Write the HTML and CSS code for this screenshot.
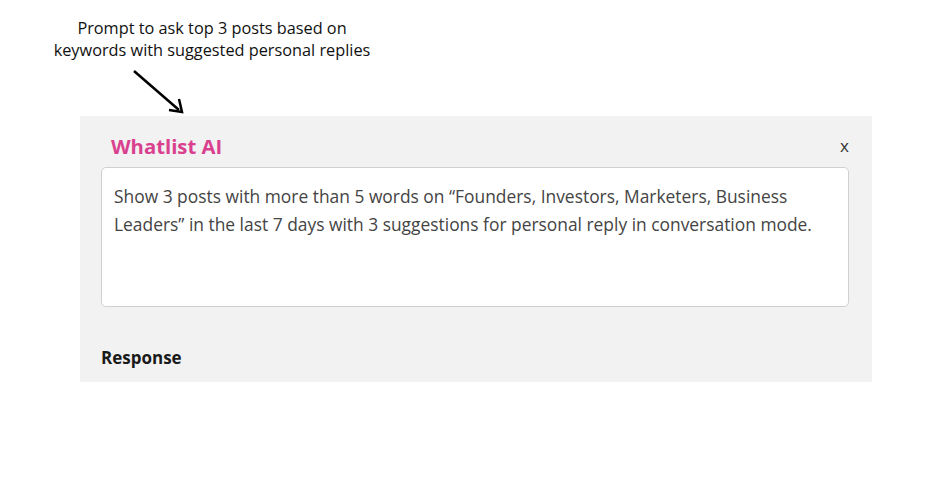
FILE: index.html
```html
<!DOCTYPE html>
<html>
<head>
<meta charset="utf-8">
<link rel="stylesheet" href="styles.css">
</head>
<body>
<div class="caption">Prompt to ask top 3 posts based on<br>keywords with suggested personal replies</div>
<svg class="arrow" width="200" height="55" viewBox="0 0 200 55">
  <line x1="134" y1="10" x2="179" y2="49" stroke="#000" stroke-width="2.5"/>
  <polyline points="169,49 182,51 179,38" fill="none" stroke="#000" stroke-width="2.5" stroke-linejoin="miter"/>
</svg>
<div class="panel">
  <div class="head">
    <span class="title">Whatlist AI</span>
    <span class="close">x</span>
  </div>
  <div class="box">Show 3 posts with more than 5 words on “Founders, Investors, Marketers, Business Leaders” in the last 7 days with 3 suggestions for personal reply in conversation mode.</div>
  <div class="response">Response</div>
</div>
</body>
</html>
```
FILE: styles.css
```css
html, body { margin: 0; padding: 0; background: #fff; }
body { font-family: "Open Sans", "Noto Sans", sans-serif; }
.caption {
  width: 424px;
  padding-top: 17px;
  text-align: center;
  font-size: 16.3px;
  line-height: 22px;
  color: #111;
}
.arrow { display: block; height: 55px; width: 200px; }
.panel {
  margin-left: 80px;
  width: 792px;
  height: 266px;
  box-sizing: border-box;
  background: #f2f2f2;
  padding: 18px 23px 0 21px;
}
.head {
  display: flex;
  justify-content: space-between;
  align-items: center;
  height: 24px;
  padding-left: 10px;
}
.title {
  font-size: 20.3px;
  font-weight: 700;
  color: #d9418f;
  line-height: 24px;
}
.close {
  font-size: 17px;
  color: #333;
  line-height: 24px;
}
.box {
  margin-top: 9px;
  height: 140px;
  box-sizing: border-box;
  background: #fff;
  border: 1px solid #d0d0d0;
  border-radius: 5px;
  padding: 14px 12px 0 12px;
  font-size: 17.4px;
  line-height: 28px;
  color: #444;
}
.response {
  margin-top: 40px;
  font-size: 17px;
  font-weight: 700;
  line-height: 22px;
  color: #1a1a1a;
}
```
